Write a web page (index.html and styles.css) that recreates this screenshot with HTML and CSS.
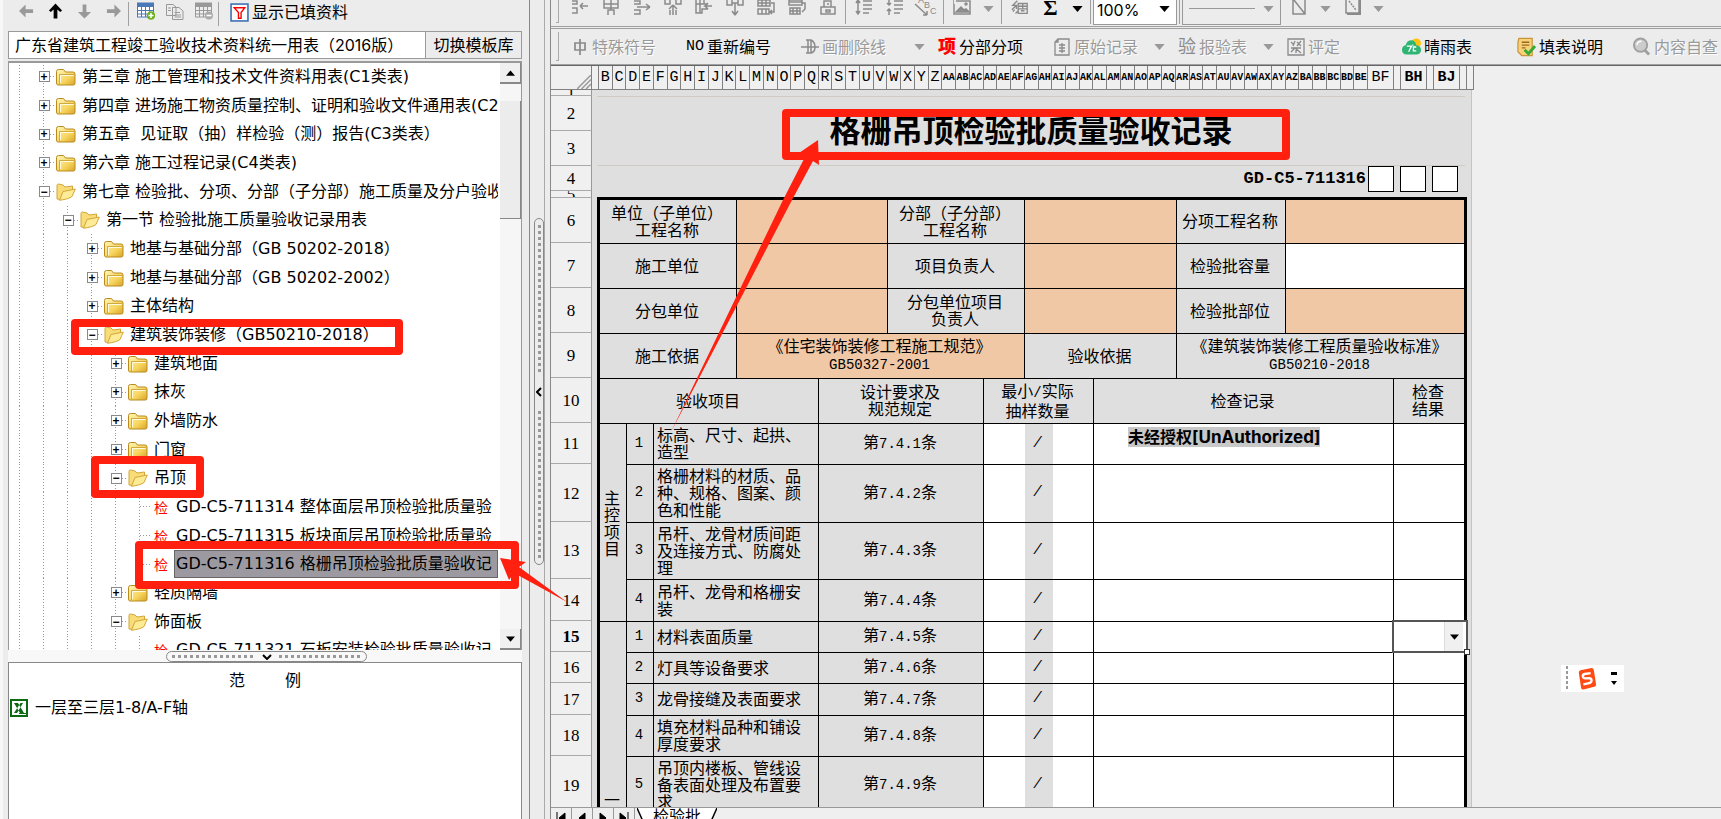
FILE: index.html
```html
<!DOCTYPE html>
<html lang="zh-CN">
<head>
<meta charset="utf-8">
<title>格栅吊顶检验批质量验收记录</title>
<link rel="stylesheet" href="styles.css">
</head>
<body>
<svg class="defs" aria-hidden="true">
  <defs>
    <linearGradient id="gold" x1="0" y1="0" x2="1" y2="1"><stop offset="0" stop-color="#fff6b8"/><stop offset="0.6" stop-color="#f7d45c"/><stop offset="1" stop-color="#d9a42a"/></linearGradient>
    <symbol id="folder" viewBox="0 0 20 18"><path d="M0.500 15V3.500Q0.500 1.500 2.500 1.500H7.500L9.500 4H17Q19 4 19 6V15Q19 17 17.500 17H2Q0.500 17 0.500 15Z" fill="url(#gold)" stroke="#b98a1e"/><path d="M4.500 15V7.500H17.500" fill="none" stroke="#fffbe0"/><path d="M3.500 16V6.500H18" fill="none" stroke="#c79a30" stroke-width="0.800"/></symbol>
    <symbol id="open" viewBox="0 0 20 18"><path d="M1 16L1 2.500Q1 1 2.500 1L7 2L9 4L16.500 3V8L5 16.500Z" fill="#f8dc78" stroke="#d2a63a"/><path d="M3.500 17.300L7 8.500L19.300 6L16 13.500Q13 16 3.500 17.300Z" fill="#fdeb96" stroke="#d2a63a"/></symbol>
    <symbol id="down" viewBox="0 0 12 7"><path d="M0 0H12L6 7Z"/></symbol>
  </defs>
</svg>

<div class="app">
  <aside class="side">
    <div class="side-tools">
      <button class="nav dim" aria-label="后退"><svg viewBox="0 0 16 16"><path d="M0 8L7 1V6H15V10H7V15Z"/></svg></button>
      <button class="nav" aria-label="上移"><svg viewBox="0 0 16 16"><path d="M8 0L15 7.500L13 9L10 6.500V16H6V6.500L3 9L1 7.500Z"/></svg></button>
      <button class="nav dim" aria-label="下移"><svg viewBox="0 0 16 16"><path d="M8 16L15 9H10V1H6V9H1Z"/></svg></button>
      <button class="nav dim" aria-label="前进"><svg viewBox="0 0 16 16"><path d="M16 8L9 1V6H1V10H9V15Z"/></svg></button>
      <i class="vline"></i>
      <button class="nav" aria-label="新增表格"><svg class="wide" viewBox="0 0 18 18"><rect x="0.500" y="1" width="16" height="14" fill="#fff" stroke="#4a79b8"/><path d="M0 1H17V5H0Z" fill="#4a79b8"/><path d="M0 8.500H17M0 12H17M4.500 4V15M8.500 4V15M12.500 4V15" stroke="#4a79b8"/><circle cx="14" cy="13.500" r="4.300" fill="#6cb31f"/><path d="M11.500 13.500H16.500M14 11V16" stroke="#fff" stroke-width="1.600"/></svg></button>
      <button class="nav" aria-label="复制"><svg class="wide" viewBox="0 0 18 18" fill="#eee" stroke="#999"><path d="M.5 2.500H7L10 5V13.500H.5Z"/><path d="M6.500 5.500H13L17 9V17.500H6.500Z"/><path d="M2 6H5M2 8.500H5M8.500 10.500H14M8.500 13H15M8.500 15H15"/></svg></button>
      <button class="nav" aria-label="删除表格"><svg class="wide" viewBox="0 0 18 18"><rect x="0.500" y="1" width="16" height="14" fill="#eee" stroke="#999"/><path d="M0 1H17V5H0Z" fill="#999"/><path d="M0 8.500H17M0 12H17M4.500 4V15M8.500 4V15M12.500 4V15" stroke="#999"/><circle cx="14" cy="13.500" r="4" fill="#aaa"/><path d="M11.500 13.500H16.500" stroke="#fff" stroke-width="1.600"/></svg></button>
      <i class="vline"></i>
      <button class="filter"><svg viewBox="0 0 18 18"><rect x="1" y="1" width="16" height="16" fill="#fff" stroke="#3d6fb4" stroke-width="1.500"/><path d="M4 4.500H14L10.500 9V14.500H8V9Z" fill="#fff" stroke="#f00" stroke-width="1.300"/></svg><span>显示已填资料</span></button>
    </div>
    <div class="template">
      <input type="text" aria-label="模板库" value="广东省建筑工程竣工验收技术资料统一用表（2016版）">
      <button>切换模板库</button>
    </div>
    <div class="tree-box">
      <ul class="tree">
        <li><i class="g"></i><span class="b"><button aria-label="展开">+</button></span><svg><use href="#folder"/></svg><span class="t">第三章 施工管理和技术文件资料用表(C1类表)</span></li>
        <li><i class="g"></i><span class="b"><button aria-label="展开">+</button></span><svg><use href="#folder"/></svg><span class="t">第四章 进场施工物资质量控制、证明和验收文件通用表(C2</span></li>
        <li><i class="g"></i><span class="b"><button aria-label="展开">+</button></span><svg><use href="#folder"/></svg><span class="t">第五章&nbsp; 见证取（抽）样检验（测）报告(C3类表）</span></li>
        <li><i class="g"></i><span class="b"><button aria-label="展开">+</button></span><svg><use href="#folder"/></svg><span class="t">第六章 施工过程记录(C4类表)</span></li>
        <li><i class="g"></i><span class="b"><button aria-label="折叠">−</button></span><svg><use href="#open"/></svg><span class="t">第七章 检验批、分项、分部（子分部）施工质量及分户验收</span></li>
        <li><i class="g"></i><i class="g"></i><span class="b"><button aria-label="折叠">−</button></span><svg><use href="#open"/></svg><span class="t">第一节 检验批施工质量验收记录用表</span></li>
        <li><i class="g"></i><i class="g"></i><i class="g"></i><span class="b"><button aria-label="展开">+</button></span><svg><use href="#folder"/></svg><span class="t">地基与基础分部（GB 50202-2018）</span></li>
        <li><i class="g"></i><i class="g"></i><i class="g"></i><span class="b"><button aria-label="展开">+</button></span><svg><use href="#folder"/></svg><span class="t">地基与基础分部（GB 50202-2002）</span></li>
        <li><i class="g"></i><i class="g"></i><i class="g"></i><span class="b"><button aria-label="展开">+</button></span><svg><use href="#folder"/></svg><span class="t">主体结构</span></li>
        <li><i class="g"></i><i class="g"></i><i class="g"></i><span class="b"><button aria-label="折叠">−</button></span><svg><use href="#open"/></svg><span class="t">建筑装饰装修（GB50210-2018）</span></li>
        <li><i class="g"></i><i class="g"></i><i class="g"></i><i class="g"></i><span class="b"><button aria-label="展开">+</button></span><svg><use href="#folder"/></svg><span class="t">建筑地面</span></li>
        <li><i class="g"></i><i class="g"></i><i class="g"></i><i class="g"></i><span class="b"><button aria-label="展开">+</button></span><svg><use href="#folder"/></svg><span class="t">抹灰</span></li>
        <li><i class="g"></i><i class="g"></i><i class="g"></i><i class="g"></i><span class="b"><button aria-label="展开">+</button></span><svg><use href="#folder"/></svg><span class="t">外墙防水</span></li>
        <li><i class="g"></i><i class="g"></i><i class="g"></i><i class="g"></i><span class="b"><button aria-label="展开">+</button></span><svg><use href="#folder"/></svg><span class="t">门窗</span></li>
        <li><i class="g"></i><i class="g"></i><i class="g"></i><i class="g"></i><span class="b"><button aria-label="折叠">−</button></span><svg><use href="#open"/></svg><span class="t">吊顶</span></li>
        <li><i class="g"></i><i class="g"></i><i class="g"></i><i class="g"></i><i class="g"></i><i class="g leaf"></i><b>检</b><span class="t">GD-C5-711314 整体面层吊顶检验批质量验</span></li>
        <li><i class="g"></i><i class="g"></i><i class="g"></i><i class="g"></i><i class="g"></i><i class="g leaf"></i><b>检</b><span class="t">GD-C5-711315 板块面层吊顶检验批质量验</span></li>
        <li><i class="g"></i><i class="g"></i><i class="g"></i><i class="g"></i><i class="g"></i><i class="g leaf"></i><b>检</b><span class="t sel">GD-C5-711316 格栅吊顶检验批质量验收记</span></li>
        <li><i class="g"></i><i class="g"></i><i class="g"></i><i class="g"></i><span class="b"><button aria-label="展开">+</button></span><svg><use href="#folder"/></svg><span class="t">轻质隔墙</span></li>
        <li><i class="g"></i><i class="g"></i><i class="g"></i><i class="g"></i><span class="b"><button aria-label="折叠">−</button></span><svg><use href="#open"/></svg><span class="t">饰面板</span></li>
        <li><i class="g"></i><i class="g"></i><i class="g"></i><i class="g"></i><i class="g"></i><i class="g leaf"></i><b>检</b><span class="t">GD-C5-711321 石板安装检验批质量验收记</span></li>
      </ul>
      <div class="scroll">
        <button aria-label="向上滚动"><svg class="tri" viewBox="0 0 12 7"><path d="M6 0L12 7H0Z"/></svg></button>
        <div class="track"></div>
        <div class="thumb"></div>
        <div class="track rest"></div>
        <button aria-label="向下滚动"><svg class="tri"><use href="#down"/></svg></button>
      </div>
    </div>
    <div class="hsplit"><div class="hgrip"><i></i><button aria-label="收起"><svg viewBox="0 0 10 6"><path d="M1 1L5 5L9 1"/></svg></button><i></i></div></div>
    <div class="examples">
      <h2><span>范</span><span>例</span></h2>
      <div class="example"><svg viewBox="0 0 18 18"><rect x="1" y="1" width="16" height="16" fill="#fff" stroke="#0a6b12" stroke-width="2"/><path d="M4 4H8L14 14H10ZM13 4H10.500L4 14H7Z" fill="#0a6b12"/><path d="M9 14.500H16" stroke="#0a6b12"/></svg><span>一层至三层1-8/A-F轴</span></div>
    </div>
  </aside>

  <div class="vsplit"><div class="vgrip"><i></i><button aria-label="收起侧栏"><svg viewBox="0 0 6 10"><path d="M5 1L1 5L5 9"/></svg></button><i></i></div></div>

  <main class="main">
    <div class="bar icons">
      <i class="handle"></i>
      <button aria-label="插入行"><svg viewBox="0 0 18 16"><path d="M1 1H6V4H1M1 8H6V13H1M9 6H17M9 6L12 3M9 6L12 9"/></svg></button>
      <button aria-label="插入列"><svg viewBox="0 0 18 16"><path d="M2 0V8H16V0M2 4H16M6 15V10H12V15M9 0V4M9 4V10"/></svg></button>
      <button aria-label="追加行"><svg viewBox="0 0 18 16"><path d="M1 1H7V4H1M1 10H7V14H1M4 7H17M17 7L13 4M17 7L13 10"/></svg></button>
      <button aria-label="追加列"><svg viewBox="0 0 18 16"><path d="M1 0V4H6V0M12 0V4H17V0M9 5L5 9M9 5L13 9M9 5V15M6 15V10M12 15V10"/></svg></button>
      <button aria-label="删除行"><svg viewBox="0 0 18 16"><path d="M1 0V13H7V9H13M1 4H9M5 0V13M9 0V4H13M17 6H10L13 3M10 6L13 9"/></svg></button>
      <button aria-label="删除列"><svg viewBox="0 0 18 16"><path d="M1 0V5H6V0M12 0V5H17V0M6 3H12M9 3V15M9 15L6 11M9 15L12 11"/></svg></button>
      <button aria-label="复制行"><svg viewBox="0 0 18 16"><path d="M1 0H13V6H1ZM1 9H12V14H1ZM5 0V6M9 0V6M5 9V14M9 9V14M1 3H13M14 3H17V12H13M15 10L13 12L15 14"/></svg></button>
      <button aria-label="复制表页"><svg viewBox="0 0 18 16"><path d="M1 0H14V5H1ZM2 8H12V14H2ZM5 8V14M9 8V14M2 11H12M1 2H14M14 12L17 9V3H14"/></svg></button>
      <button aria-label="锁定"><svg viewBox="0 0 18 16"><path d="M2 7H16V14H2ZM5 7V1H12V7M7 10H11V12H7ZM8 4H10"/></svg></button>
      <i class="vline tall"></i>
      <button aria-label="增大行距"><svg viewBox="0 0 18 16"><path d="M3 0V14M1 3L3 0L5 3M1 11L3 14L5 11M8 1H17M8 5H17M8 9H17M8 13H14"/></svg></button>
      <button aria-label="减小行距"><svg viewBox="0 0 18 16"><path d="M3 0V5M3 9V15M1 3L3 5L5 3M1 11L3 9L5 11M8 1H17M8 5H17M8 9H17M8 13H14"/></svg></button>
      <button aria-label="文字方向"><svg class="abc" viewBox="0 0 22 16"><path d="M0 4L12 15M12 15V11M12 15H8"/><text x="3" y="3">A</text><text x="9" y="8">B</text><text x="15" y="14">C</text></svg></button>
      <i class="vline tall"></i>
      <button aria-label="图片"><svg viewBox="0 0 18 16"><path d="M0 0V4M3 1H17V14H1V4" /><path d="M3 12L8 7L11 10L13 9L16 12Z" fill="#909090"/><circle cx="13" cy="4" r="1"/></svg></button>
      <button class="dd" aria-label="图片选项"><svg class="tri"><use href="#down"/></svg></button>
      <i class="vline tall"></i>
      <button aria-label="编辑"><svg viewBox="0 0 20 16"><path d="M8 3H18V14H8ZM8 6H18M8 9H18M13 3V9M11 11H15M7 0L2 5H6L1 10M6 5V9M2 12L4 10M5 14L8 11"/></svg></button>
      <button class="sum" aria-label="求和">Σ</button>
      <button class="dd on" aria-label="求和选项"><svg class="tri"><use href="#down"/></svg></button>
      <i class="vline tall"></i>
      <div class="combo zoom"><select aria-label="显示比例"><option>100%</option></select><svg class="tri"><use href="#down"/></svg></div>
      <i class="vline tall"></i>
      <div class="combo line"><select aria-label="线型"><option></option></select><hr><svg class="tri"><use href="#down"/></svg></div>
      <button aria-label="斜线"><svg viewBox="0 0 18 16"><path d="M3 0V14H15V0M4 0L15 14"/></svg></button>
      <button class="dd" aria-label="斜线选项"><svg class="tri"><use href="#down"/></svg></button>
      <button aria-label="边框"><svg viewBox="0 0 18 16"><path d="M3 0V13H16V0"/><path d="M4 14H17V0" stroke-width="2"/><path d="M6 1L13 10" stroke-dasharray="2 1"/></svg></button>
      <button class="dd" aria-label="边框选项"><svg class="tri"><use href="#down"/></svg></button>
    </div>
    <div class="bar labels">
      <i class="handle"></i>
      <button class="w115" disabled><svg class="mark" viewBox="0 0 18 18"><path d="M9 1V17M4 5H14V12H4Z" stroke-width="1.700"/></svg>特殊符号</button>
      <button class="w115"><span class="no">NO</span>重新编号</button>
      <button class="w113" disabled><svg class="mark" viewBox="0 0 18 16"><path d="M5 1H10Q14 3 14 8Q14 13 10 14H5M7 1V14M10 1V14M0 8H18" stroke-width="1.500"/></svg>画删除线</button>
      <button class="dd w24" aria-label="画线选项"><svg class="tri"><use href="#down"/></svg></button>
      <button class="w115"><b class="mark red">项</b>分部分项</button>
      <button class="w101" disabled><svg class="mark" viewBox="0 0 16 18"><path d="M4 1H15V17H1V4ZM4 1V4H1M5 7H11M5 10H11M5 13H11M8 5V15"/></svg>原始记录</button>
      <button class="dd w24" aria-label="原始记录选项"><svg class="tri"><use href="#down"/></svg></button>
      <button class="w85" disabled><span class="mark">验</span>报验表</button>
      <button class="dd w24" aria-label="报验表选项"><svg class="tri"><use href="#down"/></svg></button>
      <button class="w115" disabled><svg class="mark" viewBox="0 0 18 18"><path d="M1 1H17V17H1ZM4 4L7 7M8 3L6 8M10 4L14 8M14 3L10 8M4 10H14M4 14L8 10L14 15M9 10V15"/></svg>评定</button>
      <button class="w115"><svg class="mark fillicon" viewBox="0 0 20 18"><circle cx="15" cy="5" r="5" fill="#ffc20e"/><path d="M5 17Q0 17 0 12Q0 8 4 7Q5 2 10 2Q14 2 15 7Q20 8 20 12Q20 17 15 17Z" fill="#2fb573"/><path d="M5 8H10L7 14M15 9H12V13H15M11 7H12" stroke="#fff" stroke-width="1.400"/></svg>晴雨表</button>
      <button class="w115"><svg class="mark fillicon" viewBox="0 0 20 20"><path d="M2 1H16V19H5L1 15V5Z" fill="#f8d27a" stroke="#c9953a"/><path d="M5 5H13M5 8H13M5 11H9" stroke="#9a6a1c" stroke-width="1.400"/><path d="M8 13L12 17L19 9" stroke="#35ab35" stroke-width="3"/></svg>填表说明</button>
      <button disabled><svg class="mark fillicon" viewBox="0 0 20 20"><circle cx="9" cy="8" r="7" fill="#ccc" stroke="#a0a0a0" stroke-width="2"/><path d="M5 8Q6 4 10 4" stroke="#fff" stroke-width="1.500"/><path d="M13 13L18 18" stroke="#a0a0a0" stroke-width="3"/></svg>内容自查</button>
    </div>

    <div class="sheet">
      <div class="cols">
        <span class="corner"><svg viewBox="0 0 14 14"><path d="M0 14L14 0M4.500 14L14 4.500M9 14L14 9"/></svg></span><span class="n"></span>
        <div class="letters">
          <span>B</span><span>C</span><span>D</span><span>E</span><span>F</span><span>G</span><span>H</span><span>I</span><span>J</span><span>K</span><span>L</span><span>M</span><span>N</span><span>O</span><span>P</span><span>Q</span><span>R</span><span>S</span><span>T</span><span>U</span><span>V</span><span>W</span><span>X</span><span>Y</span><span>Z</span><span>AA</span><span>AB</span><span>AC</span><span>AD</span><span>AE</span><span>AF</span><span>AG</span><span>AH</span><span>AI</span><span>AJ</span><span>AK</span><span>AL</span><span>AM</span><span>AN</span><span>AO</span><span>AP</span><span>AQ</span><span>AR</span><span>AS</span><span>AT</span><span>AU</span><span>AV</span><span>AW</span><span>AX</span><span>AY</span><span>AZ</span><span>BA</span><span>BB</span><span>BC</span><span>BD</span><span>BE</span>
        </div>
        <span class="w">BF</span><span class="n"></span><span class="w on">BH</span><span class="n"></span><span class="w on">BJ</span><span class="n"></span><span class="n"></span>
      </div>
      <div class="grid">
        <div class="rows">
          <span class="h6">1</span><span class="h35">2</span><span class="h35">3</span><span class="h25">4</span><span class="h7">5</span>
          <span class="h45">6</span><span class="h45">7</span><span class="h45">8</span><span class="h45">9</span><span class="h45">10</span>
          <span class="h41">11</span><span class="h58">12</span><span class="h57">13</span><span class="h42">14</span><span class="h31 on">15</span><span class="h31">16</span><span class="h32">17</span><span class="h41">18</span><span class="h58">19</span>
        </div>
        <div class="paper">
          <h1>格栅吊顶检验批质量验收记录</h1>
          <div class="code"><label for="code1">GD-C5-711316</label><input id="code1" type="text"><input type="text" aria-label="编号2"><input type="text" aria-label="编号3"></div>
          <table>
            <colgroup><col class="c28"><col class="c27"><col class="c83"><col class="c82"><col class="c69"><col class="c96"><col class="c41"><col class="c28"><col class="c41"><col class="c83"><col class="c109"><col class="c108"><col class="c72"></colgroup>
            <tbody>
            <tr class="h45"><th colspan="3">单位（子单位）<br>工程名称</th><td colspan="2" class="fill"></td><th colspan="2">分部（子分部）<br>工程名称</th><td colspan="3" class="fill"></td><th>分项工程名称</th><td colspan="2" class="fill"></td></tr>
            <tr class="h45"><th colspan="3">施工单位</th><td colspan="2" class="fill"></td><th colspan="2">项目负责人</th><td colspan="3" class="fill"></td><th>检验批容量</th><td colspan="2"></td></tr>
            <tr class="h45"><th colspan="3">分包单位</th><td colspan="2" class="fill"></td><th colspan="2">分包单位项目<br>负责人</th><td colspan="3" class="fill"></td><th>检验批部位</th><td colspan="2" class="fill"></td></tr>
            <tr class="h45"><th colspan="3">施工依据</th><td colspan="4" class="fill">《住宅装饰装修工程施工规范》<br><span class="m">GB50327-2001</span></td><th colspan="3">验收依据</th><th colspan="3">《建筑装饰装修工程质量验收标准》<br><span class="m">GB50210-2018</span></th></tr>
            <tr class="h45"><th colspan="4">验收项目</th><th colspan="2">设计要求及<br>规范规定</th><th colspan="3">最小<span class="m">/</span>实际<br>抽样数量</th><th colspan="3">检查记录</th><th>检查<br>结果</th></tr>
            <tr class="h41"><th rowspan="4" class="group">主控项目</th><th class="m">1</th><th colspan="2" class="item">标高、尺寸、起拱、造型</th><th colspan="2">第<span class="m">7.4.1</span>条</th><td class="l"></td><td class="s">/</td><td class="r"></td><td colspan="3" class="rec"><mark>未经授权<span>[UnAuthorized]</span></mark></td><td></td></tr>
            <tr class="h58"><th class="m">2</th><th colspan="2" class="item">格栅材料的材质、品种、规格、图案、颜色和性能</th><th colspan="2">第<span class="m">7.4.2</span>条</th><td class="l"></td><td class="s">/</td><td class="r"></td><td colspan="3"></td><td></td></tr>
            <tr class="h57"><th class="m">3</th><th colspan="2" class="item">吊杆、龙骨材质间距及连接方式、防腐处理</th><th colspan="2">第<span class="m">7.4.3</span>条</th><td class="l"></td><td class="s">/</td><td class="r"></td><td colspan="3"></td><td></td></tr>
            <tr class="h42"><th class="m">4</th><th colspan="2" class="item">吊杆、龙骨和格栅安装</th><th colspan="2">第<span class="m">7.4.4</span>条</th><td class="l"></td><td class="s">/</td><td class="r"></td><td colspan="3"></td><td></td></tr>
            <tr class="h31"><th rowspan="5" class="group low">一</th><th class="m">1</th><th colspan="2" class="item">材料表面质量</th><th colspan="2">第<span class="m">7.4.5</span>条</th><td class="l"></td><td class="s">/</td><td class="r"></td><td colspan="3"></td><td class="pick"><div class="picker"><select aria-label="检查结果"><option></option></select><span><svg class="tri"><use href="#down"/></svg></span><i></i></div></td></tr>
            <tr class="h31"><th class="m">2</th><th colspan="2" class="item">灯具等设备要求</th><th colspan="2">第<span class="m">7.4.6</span>条</th><td class="l"></td><td class="s">/</td><td class="r"></td><td colspan="3"></td><td></td></tr>
            <tr class="h32"><th class="m">3</th><th colspan="2" class="item">龙骨接缝及表面要求</th><th colspan="2">第<span class="m">7.4.7</span>条</th><td class="l"></td><td class="s">/</td><td class="r"></td><td colspan="3"></td><td></td></tr>
            <tr class="h41"><th class="m">4</th><th colspan="2" class="item">填充材料品种和铺设厚度要求</th><th colspan="2">第<span class="m">7.4.8</span>条</th><td class="l"></td><td class="s">/</td><td class="r"></td><td colspan="3"></td><td></td></tr>
            <tr class="h58"><th class="m">5</th><th colspan="2" class="item">吊顶内楼板、管线设备表面处理及布置要求</th><th colspan="2">第<span class="m">7.4.9</span>条</th><td class="l"></td><td class="s">/</td><td class="r"></td><td colspan="3"></td><td></td></tr>
            </tbody>
          </table>
        </div>
      </div>
    </div>
    <div class="tabs">
      <button aria-label="首页"><svg viewBox="0 0 10 12"><path d="M1 0V12M9 1L3 6L9 11Z"/></svg></button><button aria-label="上一页"><svg viewBox="0 0 10 12"><path d="M8 1L2 6L8 11Z"/></svg></button><button aria-label="下一页"><svg viewBox="0 0 10 12"><path d="M2 1L8 6L2 11Z"/></svg></button><button aria-label="末页"><svg viewBox="0 0 10 12"><path d="M9 0V12M1 1L7 6L1 11Z"/></svg></button>
      <div class="tab"><svg viewBox="0 0 80 20"><path d="M0 0L9 20H71L80 0Z" fill="#fff"/><path d="M0 0L9 20M71 20L80 0" stroke="#000" stroke-width="1.500"/></svg><span>检验批</span></div>
    </div>
  </main>
</div>

<div class="ime"><i></i><svg viewBox="0 0 22 24"><path d="M2 5Q2 3 4 2.500L16 0Q18 0 18.500 2L21 18Q21 20 19 20.500L7 23.500Q5 24 4.500 22Z" fill="#ff4a12"/><path d="M15 5.500L8.500 6.500Q6 7 6.500 9.500Q7 11.500 9.500 11.300L13 11Q16 11 16 13.500Q16 16 13.500 16.500L7 18" fill="none" stroke="#fff" stroke-width="2.600"/></svg><svg class="opt" viewBox="0 0 8 14"><path d="M1 0H7V3H1ZM1 9H7L4 13Z"/></svg></div>

<svg class="notes" width="1721" height="819" viewBox="0 0 1721 819" aria-hidden="true">
  <g fill="none" stroke="#ff2010" stroke-width="8" stroke-linejoin="round">
    <rect x="786" y="113" width="500" height="43"/>
    <rect x="75" y="323" width="324" height="28"/>
    <rect x="95" y="460" width="105" height="34"/>
    <rect x="139" y="545" width="376" height="40"/>
  </g>
  <path d="M818 140L799 153L806 155L783 200L671 432L792 200L813 161L819 165Z" fill="#ff2010"/>
  <path d="M500 558L526 562L519 567L567 602L514 573L509 580Z" fill="#ff2010"/>
</svg>
</body>
</html>
```
FILE: styles.css
```css
* { box-sizing: border-box; }
html, body { height: 100%; }
body {
  margin: 0;
  overflow: hidden;
  background: #ececec;
  color: #000;
  font: 16px/20px "Inter", "Noto Sans CJK SC", sans-serif;
}
button, input, select { font: inherit; color: inherit; margin: 0; padding: 0; border: 0; background: none; border-radius: 0; }
button { display: flex; align-items: center; justify-content: center; white-space: nowrap; flex: none; }
svg { fill: none; flex: none; display: block; }
h1, h2, ul { margin: 0; padding: 0; }
i { font-style: normal; }
.defs { position: absolute; width: 0; height: 0; }
.tri { width: 12px; height: 7px; fill: #000; }

.app { display: flex; height: 100vh; }

/* left pane */
.side { width: 524px; flex: none; padding: 0 2px 0 5px; display: flex; flex-direction: column; border-left: 3px solid #f8f8f8; }
.side-tools { height: 31px; flex: none; display: flex; align-items: flex-start; padding: 2px 0 0 4px; }
.nav { width: 29px; height: 18px; }
.nav svg { width: 15px; height: 16px; fill: #000; }
.nav.dim svg { fill: #999; }
.nav svg.wide { width: 18px; height: 18px; fill: none; }
.vline { width: 1px; height: 24px; background: #a0a0a0; flex: none; }
.side-tools .nav:nth-of-type(5) { margin-left: 2px; }
.side-tools .nav:nth-of-type(n+5) { width: 29px; }
.filter { margin-left: 11px; gap: 3px; height: 20px; }
.filter svg { width: 19px; height: 19px; }
.template { display: flex; height: 28px; flex: none; border: 1px solid #9a9a9a; margin-bottom: 2px; background: #fff; }
.template input { flex: 1; min-width: 0; padding-left: 6px; }
.template button { width: 96px; background: #ececec; border-left: 1px solid #9a9a9a; }

.tree-box { flex: 587 1 0; min-height: 0; display: flex; background: #fff; border: 1px solid #9a9a9a; border-top-width: 2px; border-bottom: 0; }
.tree { flex: 1; min-width: 0; overflow: hidden; list-style: none; margin: -1px 2px 0 -1px; }
.tree li { display: flex; align-items: center; height: 29px; }
.tree li:nth-child(3n) { height: 28px; }
.tree svg { width: 20px; height: 18px; }
.g { width: 24px; align-self: stretch; flex: none; background: repeating-linear-gradient(#999 0 1px, transparent 1px 3px) 11px 0 / 1px 100% no-repeat; }
.leaf { background: repeating-linear-gradient(#999 0 1px, transparent 1px 3px) 11px 0 / 1px 100% no-repeat, repeating-linear-gradient(90deg, #999 0 1px, transparent 1px 3px) 12px 50% / 12px 1px no-repeat; }
.b { width: 24px; align-self: stretch; flex: none; display: flex; align-items: center; justify-content: center; background: repeating-linear-gradient(#999 0 1px, transparent 1px 3px) 11px 0 / 1px 100% no-repeat, repeating-linear-gradient(90deg, #999 0 1px, transparent 1px 3px) 12px 50% / 12px 1px no-repeat; }
.b button { width: 11px; height: 11px; border: 1px solid #8a8a8a; background: #fff; font: bold 12px/8px "Liberation Sans", sans-serif; }
.tree b { width: 20px; padding-left: 2px; color: #f00; font: 14px/20px "Noto Sans CJK SC", sans-serif; flex: none; }
.t { flex: 1; min-width: 0; overflow: hidden; white-space: nowrap; margin-left: 4px; padding: 0 2px; line-height: 26px; }
.t, .example { font-family: "DejaVu Sans", "Noto Sans CJK SC", sans-serif; }
.tree b + .t { margin-left: 2px; }
.tree b + .t.sel { border: 1px solid #666; background: #9c9aa0; padding: 0 0 0 1px; }
.scroll { width: 21px; display: flex; flex-direction: column; }
.scroll button { height: 21px; background: #f0f0f0; border-right: 1px solid #888; border-bottom: 2px solid #888; }
.scroll .tri { width: 9px; height: 6px; }
.track { height: 17px; background: #f6f6f6; }
.track.rest { flex: 1; height: auto; }
.thumb { height: 118px; background: #ececec; border-right: 1px solid #888; border-bottom: 1px solid #888; }

.hsplit { height: 12px; flex: none; padding: 1px 0 0 158px; background: #f8f8f8; }
.hgrip { width: 201px; height: 11px; display: flex; align-items: center; justify-content: space-between; padding: 0 5px; border: 1px solid #888; border-radius: 6px; }
.hgrip i { width: 82px; height: 3px; background: repeating-linear-gradient(90deg, #999 0 3px, transparent 3px 6px); }
.hgrip svg { width: 10px; height: 6px; stroke: #000; stroke-width: 2; }
.examples { flex: 142 1 0; min-height: 0; background: #fff; border: 1px solid #888; border-bottom: 0; padding: 7px 1px; }
.examples h2 { display: flex; justify-content: center; gap: 40px; font-size: 16px; font-weight: 400; }
.example { display: flex; align-items: center; gap: 7px; margin-top: 8px; }
.example svg { width: 18px; height: 18px; }

.vsplit { width: 27px; flex: none; border-right: 1px solid #888; padding: 218px 6px 0 6px; background: linear-gradient(90deg, transparent 5px, #888 5px 6px, transparent 6px 20px, #aaa 20px 21px, transparent 21px); }
.vgrip { height: 347px; display: flex; flex-direction: column; align-items: center; justify-content: space-between; padding: 6px 0; border: 1px solid #888; border-radius: 7px; margin-left: 4px; }
.vgrip i { width: 3px; height: 147px; background: repeating-linear-gradient(#999 0 3px, transparent 3px 6px); }
.vgrip svg { width: 6px; height: 10px; stroke: #000; stroke-width: 2; }

/* toolbars */
.main { flex: 1; min-width: 0; display: flex; flex-direction: column; overflow: hidden; }
.bar { display: flex; flex: none; overflow: hidden; }
.icons { height: 27px; border-bottom: 1px solid #a0a0a0; }
.handle { width: 3px; margin: 0 5px 3px 5px; border: 1px solid #aaa; border-width: 0 1px 1px 0; flex: none; }
.icons > button { width: 31px; height: 16px; }
.icons > button.dd { width: 22px; height: 18px; }
.icons button svg { width: 18px; height: 16px; stroke: #8a8a8a; stroke-width: 1.5; }
.icons svg.abc { width: 22px; overflow: visible; }
.abc text { font: 9px "Liberation Sans", sans-serif; fill: #8a8a8a; stroke: none; }
.icons button svg.tri, .bar .tri { width: 11px; height: 6px; fill: #999; stroke: none; }
.icons .on .tri, .icons .zoom .tri { fill: #000; }
.tall { margin: 0 2px; }
.icons button.sum { font: bold 22px/16px "Liberation Serif", serif; }
.combo { position: relative; height: 25px; border: 1px solid #999; border-top: 0; }
.combo select { width: 100%; height: 20px; appearance: none; }
.combo .tri { position: absolute; right: 6px; top: 6px; }
.zoom { width: 84px; background: #fff; }
.zoom select { padding-left: 3px; }
.line { width: 99px; margin-right: 2px; }
.line hr { position: absolute; left: 6px; right: 25px; top: 8px; margin: 0; border: 0; border-top: 1px solid #999; }
.labels { height: 38px; padding-top: 2px; align-items: center; border-bottom: 1px solid #a0a0a0; background: linear-gradient(transparent 1px, #a0a0a0 1px 2px, transparent 2px); }
.labels .handle { height: 29px; margin: 0 6px 0 5px; }
.labels button { justify-content: flex-start; gap: 3px; height: 28px; padding-top: 1px; }
.labels > .handle + button { margin-left: 6px; }
.labels button:disabled { color: #9a9a9a; text-shadow: 1px 1px 0 #fff; }
.mark { width: 18px; flex: none; }
b.mark, span.mark { color: #8a8a8a; font-size: 18px; text-shadow: none; }
b.mark.red { color: #f00; font-weight: 900; }
svg.mark { height: 18px; stroke: #8a8a8a; stroke-width: 1.3; }
svg.mark.fillicon { width: 19px; height: 20px; stroke: none; }
.no { width: 18px; font: 15px/20px "Liberation Mono", monospace; }
.w115 { width: 115px; }
.w113 { width: 113px; }
.w101 { width: 101px; }
.w85 { width: 85px; }
.w24 { width: 24px; }

/* spreadsheet */
.sheet { flex: 1; min-height: 0; display: flex; flex-direction: column; overflow: hidden; background: #efefef; border-top: 1px solid #666; }
.cols { display: flex; height: 24px; width: 921px; flex: none; font: 15px/23px "Liberation Mono", monospace; }
.cols span { border-right: 1px solid #808080; border-bottom: 1px solid #808080; background: #f0f0f0; text-align: center; flex: none; overflow: hidden; display: flex; justify-content: center; }
.cols .corner { width: 41px; align-items: flex-end; justify-content: flex-end; }
.corner svg { width: 14px; height: 14px; stroke: #999; stroke-width: 1.5; }
.cols .n { width: 7px; }
.cols .w { width: 26px; }
.cols .on { font-weight: 700; }
.letters { display: flex; width: 769px; flex: none; }
.letters span { flex: 1 1 0; min-width: 0; }
.letters span:nth-child(n+26) { font-size: 10px; font-weight: 700; }
.grid { display: flex; flex: 1; min-height: 0; overflow: hidden; }
.rows { width: 41px; flex: none; font: 17px/20px "Liberation Serif", serif; }
.rows span { display: flex; align-items: center; justify-content: center; overflow: hidden; padding-top: 2px; border-right: 1px solid #999; border-bottom: 1px solid #aaa; background: #f0f0f0; }
.rows .on { font-weight: 700; }
.h6 { height: 6px; }
.h7 { height: 7px; }
.h25 { height: 25px; }
.h31 { height: 31px; }
.h32 { height: 32px; }
.h35 { height: 35px; }
.h41 { height: 41px; }
.h42 { height: 42px; }
.h45 { height: 45px; }
.h57 { height: 57px; }
.h58 { height: 58px; }
.paper { width: 880px; flex: none; padding: 6px 6px 0 5px; background: #dfdfdf; border-right: 1px solid #c8c4b8; }
.paper h1 { height: 70px; border: 1px solid #d0ccc4; border-width: 1px 0; display: flex; justify-content: center; font: bold 31px/64px "Noto Sans CJK SC", sans-serif; }
.code { display: flex; justify-content: flex-end; align-items: center; height: 25px; gap: 6px; padding-right: 7px; font: bold 17px/24px "Liberation Mono", monospace; }
.code label { margin-right: -4px; }
.code input { width: 26px; height: 26px; background: #fff; border: 1px solid #000; }
table { table-layout: fixed; width: 868px; margin-top: 6px; border-collapse: collapse; border: 3px solid #000; font: 16px/17px "Noto Sans CJK SC", sans-serif; }
th, td { padding: 0 2px 2px 0; border: 1px solid #000; font-weight: 400; text-align: center; }
th { background: #dfdfdf; }
td { background: #fff; }
.fill { background: #f0c8a5; }
.m, .s { font-family: "Liberation Mono", monospace; font-size: 14px; }
.item { text-align: left; padding: 0 4px 2px 3px; }
.group { padding: 0 6px 0 4px; }
.low { vertical-align: bottom; padding-bottom: 5px; }
.l { border-right: 0; }
.r { border-left: 0; }
.s { border-left: 0; border-right: 0; background: #dfdfdf; font-style: italic; }
.rec { text-align: left; vertical-align: top; padding: 3px 0 0 34px; }
mark { display: inline-block; background: #c8c8c8; color: #000; font-weight: 700; line-height: 19px; }
mark span { font-family: "Inter", sans-serif; font-size: 17px; }
.pick { vertical-align: top; padding: 0; }
.picker { position: relative; display: flex; height: 29px; width: 72px; padding-right: 3px; background: #fff; outline: 2px solid #555; }
.picker select { flex: 1; min-width: 0; appearance: none; background: #fff; }
.picker span { width: 19px; display: flex; align-items: center; justify-content: center; background: #f0f0f0; border-left: 1px solid #ddd; }
.picker .tri { width: 9px; height: 6px; }
.picker i { position: absolute; right: -4px; bottom: -4px; width: 6px; height: 6px; background: #fff; border: 1px solid #333; }
.c27 { width: 27px; } .c28 { width: 28px; } .c41 { width: 41px; } .c69 { width: 69px; } .c72 { width: 72px; } .c82 { width: 82px; }
.c83 { width: 83px; } .c96 { width: 96px; } .c108 { width: 108px; } .c109 { width: 109px; }

.tabs { display: flex; height: 12px; flex: none; overflow: hidden; border-top: 1px solid #999; background: #efefef; }
.tabs button { width: 21px; height: 20px; border-right: 1px solid #999; }
.tabs button svg { width: 10px; height: 12px; fill: #000; stroke: #000; }
.tab { position: relative; width: 80px; height: 20px; margin-left: 2px; text-align: center; }
.tab svg { width: 80px; height: 20px; }
.tab span { position: absolute; inset: 0; line-height: 16px; }

/* floating layers */
.ime { position: absolute; right: 97px; bottom: 127px; width: 63px; height: 27px; background: #fff; display: flex; align-items: center; padding-left: 5px; }
.ime i { width: 2px; height: 25px; margin-right: 9px; background: repeating-linear-gradient(#999 0 3px, transparent 3px 5px); }
.ime svg { width: 20px; height: 22px; }
.ime svg.opt { width: 8px; height: 14px; margin-left: 13px; fill: #000; }
.notes { position: absolute; left: 0; top: 0; pointer-events: none; }
```
